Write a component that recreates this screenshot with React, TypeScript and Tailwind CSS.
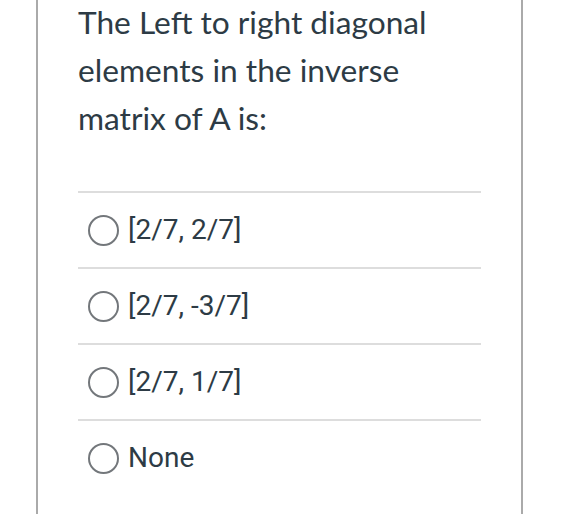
import React from "react";

const options = ["[2/7, 2/7]", "[2/7, -3/7]", "[2/7, 1/7]", "None"];

export default function App() {
  return (
    <div className="h-[516px] w-[578px] overflow-hidden bg-white font-['Lato','Liberation_Sans',sans-serif] text-[#2d3b45]">
      <div className="ml-[36px] h-full w-[487px] border-x-2 border-[#aaaaaa] px-[40px]">
        <h2 className="-mt-[2px] text-[31.7px] font-normal leading-[48px]">
          The Left to right diagonal elements in the inverse matrix of A is:
        </h2>

        <div className="mt-[49px]">
          {options.map((opt) => (
            <label
              key={opt}
              className="flex h-[76px] items-center border-t-2 border-[#dddddd] pl-[10px]"
            >
              <span className="h-[31px] w-[31px] shrink-0 rounded-full border-2 border-[#73777b] bg-white" />
              <span className="ml-[9px] font-['Roboto','Liberation_Sans',sans-serif] text-[28px] leading-none">
                {opt}
              </span>
            </label>
          ))}
        </div>
      </div>
    </div>
  );
}
